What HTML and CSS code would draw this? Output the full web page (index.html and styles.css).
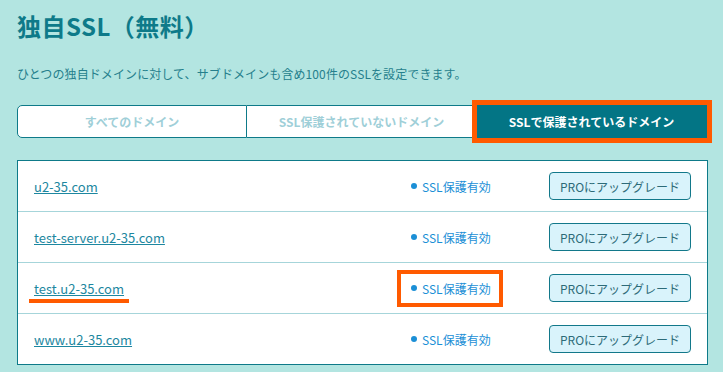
FILE: index.html
```html
<!DOCTYPE html>
<html lang="ja">
<head>
    <meta charset="UTF-8">
    <meta name="viewport" content="width=device-width, initial-scale=1.0">
    <title>独自SSL（無料）</title>
    <link rel="stylesheet" href="styles.css">
</head>
<body>
    <div class="page">
        <h1 class="title">独自SSL（無料）</h1>
        <p class="lead">ひとつの独自ドメインに対して、サブドメインも含め100件のSSLを設定できます。</p>

        <div class="tabs">
            <button class="tab">すべてのドメイン</button>
            <button class="tab">SSL保護されていないドメイン</button>
            <button class="tab tab-active mark">SSLで保護されているドメイン</button>
        </div>

        <div class="domains">
            <div class="domain-row">
                <a href="#" class="domain-name">u2-35.com</a>
                <span class="status">SSL保護有効</span>
                <button class="btn-upgrade">PROにアップグレード</button>
            </div>
            <div class="domain-row">
                <a href="#" class="domain-name">test-server.u2-35.com</a>
                <span class="status">SSL保護有効</span>
                <button class="btn-upgrade">PROにアップグレード</button>
            </div>
            <div class="domain-row">
                <a href="#" class="domain-name mark-line">test.u2-35.com</a>
                <span class="status mark-box">SSL保護有効</span>
                <button class="btn-upgrade">PROにアップグレード</button>
            </div>
            <div class="domain-row">
                <a href="#" class="domain-name">www.u2-35.com</a>
                <span class="status">SSL保護有効</span>
                <button class="btn-upgrade">PROにアップグレード</button>
            </div>
        </div>
    </div>
</body>
</html>
```

FILE: styles.css
```css
body { margin: 0; background-color: #b3e5e1; font-family: "Noto Sans CJK JP", "Noto Sans", sans-serif; }
.page { padding: 11px 15px 0 17px; width: 691px; }
.title { margin: 0; font-size: 24px; line-height: 30px; font-weight: bold; color: #0e7a89; letter-spacing: 0.5px; }
.lead { margin: 25px 0 0; font-size: 12px; line-height: 16px; color: #257f8c; letter-spacing: 0.1px; }
.tabs { display: grid; grid-template-columns: repeat(3, 1fr); width: 690px; height: 33px; margin-top: 23px; }
.tab { font-family: inherit; font-size: 12px; font-weight: bold; color: #9fcfd8; background: white; border: 1px solid #0e7a89; border-left: none; padding: 0; cursor: pointer; }
.tab:first-child { border-left: 1px solid #0e7a89; border-radius: 5px 0 0 5px; }
.tab-active { background: #037585; color: white; border-color: #037585; }
.mark { outline: 5px solid #ff5a00; }
.domains { margin-top: 22px; background: white; border: 1px solid #0e7a89; }
.domain-row { display: grid; grid-template-columns: 1fr 138px 142px; align-items: center; height: 50px; padding: 0 16px; border-top: 1px solid #a6d5da; }
.domain-row:first-child { border-top: none; }
.domain-name { justify-self: start; font-size: 13px; color: #1d87a0; text-decoration: underline; }
.status { justify-self: start; display: flex; align-items: center; gap: 5px; font-size: 12px; color: #1b8fd6; }
.status::before { content: ""; width: 6px; height: 6px; border-radius: 50%; background: #1b8fd6; }
.btn-upgrade { font-family: inherit; font-size: 12px; color: #2d6b78; background: #d9f3fb; border: 1px solid #12788a; border-radius: 4px; height: 28px; padding: 0; cursor: pointer; }
.mark-line { position: relative; }
.mark-line::after { content: ""; position: absolute; left: -5px; right: -5px; bottom: -5px; height: 4px; background: #ff5a00; }
.mark-box { position: relative; }
.mark-box::after { content: ""; position: absolute; top: -10px; bottom: -10px; left: -14px; right: -12px; border: 4px solid #ff5a00; }
```
